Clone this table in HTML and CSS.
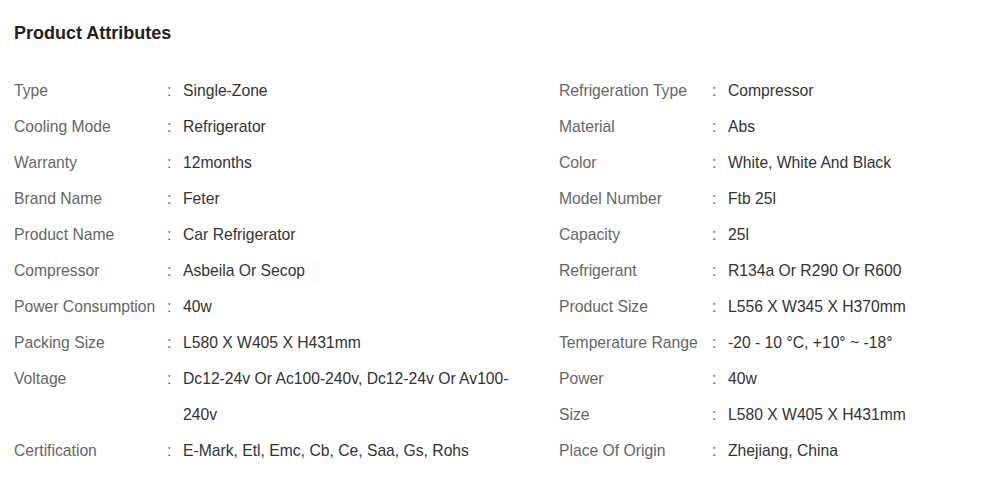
FILE: index.html
```html
<!DOCTYPE html>
<html>
<head>
<meta charset="utf-8">
<link rel="stylesheet" href="styles.css">
</head>
<body>
<section class="attrs">
  <h2 class="title">Product Attributes</h2>
  <div class="cols">
    <dl class="list">
      <div class="row"><dt>Type</dt><span class="colon">:</span><dd>Single-Zone</dd></div>
      <div class="row"><dt>Cooling Mode</dt><span class="colon">:</span><dd>Refrigerator</dd></div>
      <div class="row"><dt>Warranty</dt><span class="colon">:</span><dd>12months</dd></div>
      <div class="row"><dt>Brand Name</dt><span class="colon">:</span><dd>Feter</dd></div>
      <div class="row"><dt>Product Name</dt><span class="colon">:</span><dd>Car Refrigerator</dd></div>
      <div class="row"><dt>Compressor</dt><span class="colon">:</span><dd>Asbeila Or Secop</dd></div>
      <div class="row"><dt>Power Consumption</dt><span class="colon">:</span><dd>40w</dd></div>
      <div class="row"><dt>Packing Size</dt><span class="colon">:</span><dd>L580 X W405 X H431mm</dd></div>
      <div class="row"><dt>Voltage</dt><span class="colon">:</span><dd>Dc12-24v Or Ac100-240v, Dc12-24v Or Av100-240v</dd></div>
      <div class="row"><dt>Certification</dt><span class="colon">:</span><dd>E-Mark, Etl, Emc, Cb, Ce, Saa, Gs, Rohs</dd></div>
    </dl>
    <dl class="list">
      <div class="row"><dt>Refrigeration Type</dt><span class="colon">:</span><dd>Compressor</dd></div>
      <div class="row"><dt>Material</dt><span class="colon">:</span><dd>Abs</dd></div>
      <div class="row"><dt>Color</dt><span class="colon">:</span><dd>White, White And Black</dd></div>
      <div class="row"><dt>Model Number</dt><span class="colon">:</span><dd>Ftb 25l</dd></div>
      <div class="row"><dt>Capacity</dt><span class="colon">:</span><dd>25l</dd></div>
      <div class="row"><dt>Refrigerant</dt><span class="colon">:</span><dd>R134a Or R290 Or R600</dd></div>
      <div class="row"><dt>Product Size</dt><span class="colon">:</span><dd>L556 X W345 X H370mm</dd></div>
      <div class="row"><dt>Temperature Range</dt><span class="colon">:</span><dd>-20 - 10 °C, +10° ~ -18°</dd></div>
      <div class="row"><dt>Power</dt><span class="colon">:</span><dd>40w</dd></div>
      <div class="row"><dt>Size</dt><span class="colon">:</span><dd>L580 X W405 X H431mm</dd></div>
      <div class="row"><dt>Place Of Origin</dt><span class="colon">:</span><dd>Zhejiang, China</dd></div>
    </dl>
  </div>
</section>
</body>
</html>
```
FILE: styles.css
```css
html, body {
  margin: 0;
  padding: 0;
  background: #fff;
}
body {
  font-family: "Liberation Sans", Arial, sans-serif;
}
.attrs {
  padding: 22px 14px 0 14px;
}
.title {
  margin: 0;
  font-size: 18px;
  line-height: 22px;
  font-weight: bold;
  color: #222;
}
.cols {
  display: grid;
  grid-template-columns: 515px 1fr;
  column-gap: 30px;
  margin-top: 29px;
}
.list {
  margin: 0;
}
.row {
  display: flex;
  font-size: 15.7px;
  line-height: 36px;
}
.row dt {
  width: 153px;
  flex: none;
  color: #666;
  white-space: nowrap;
}
.row .colon {
  width: 16px;
  flex: none;
  color: #666;
}
.row dd {
  margin: 0;
  color: #333;
  flex: 1;
}
```
